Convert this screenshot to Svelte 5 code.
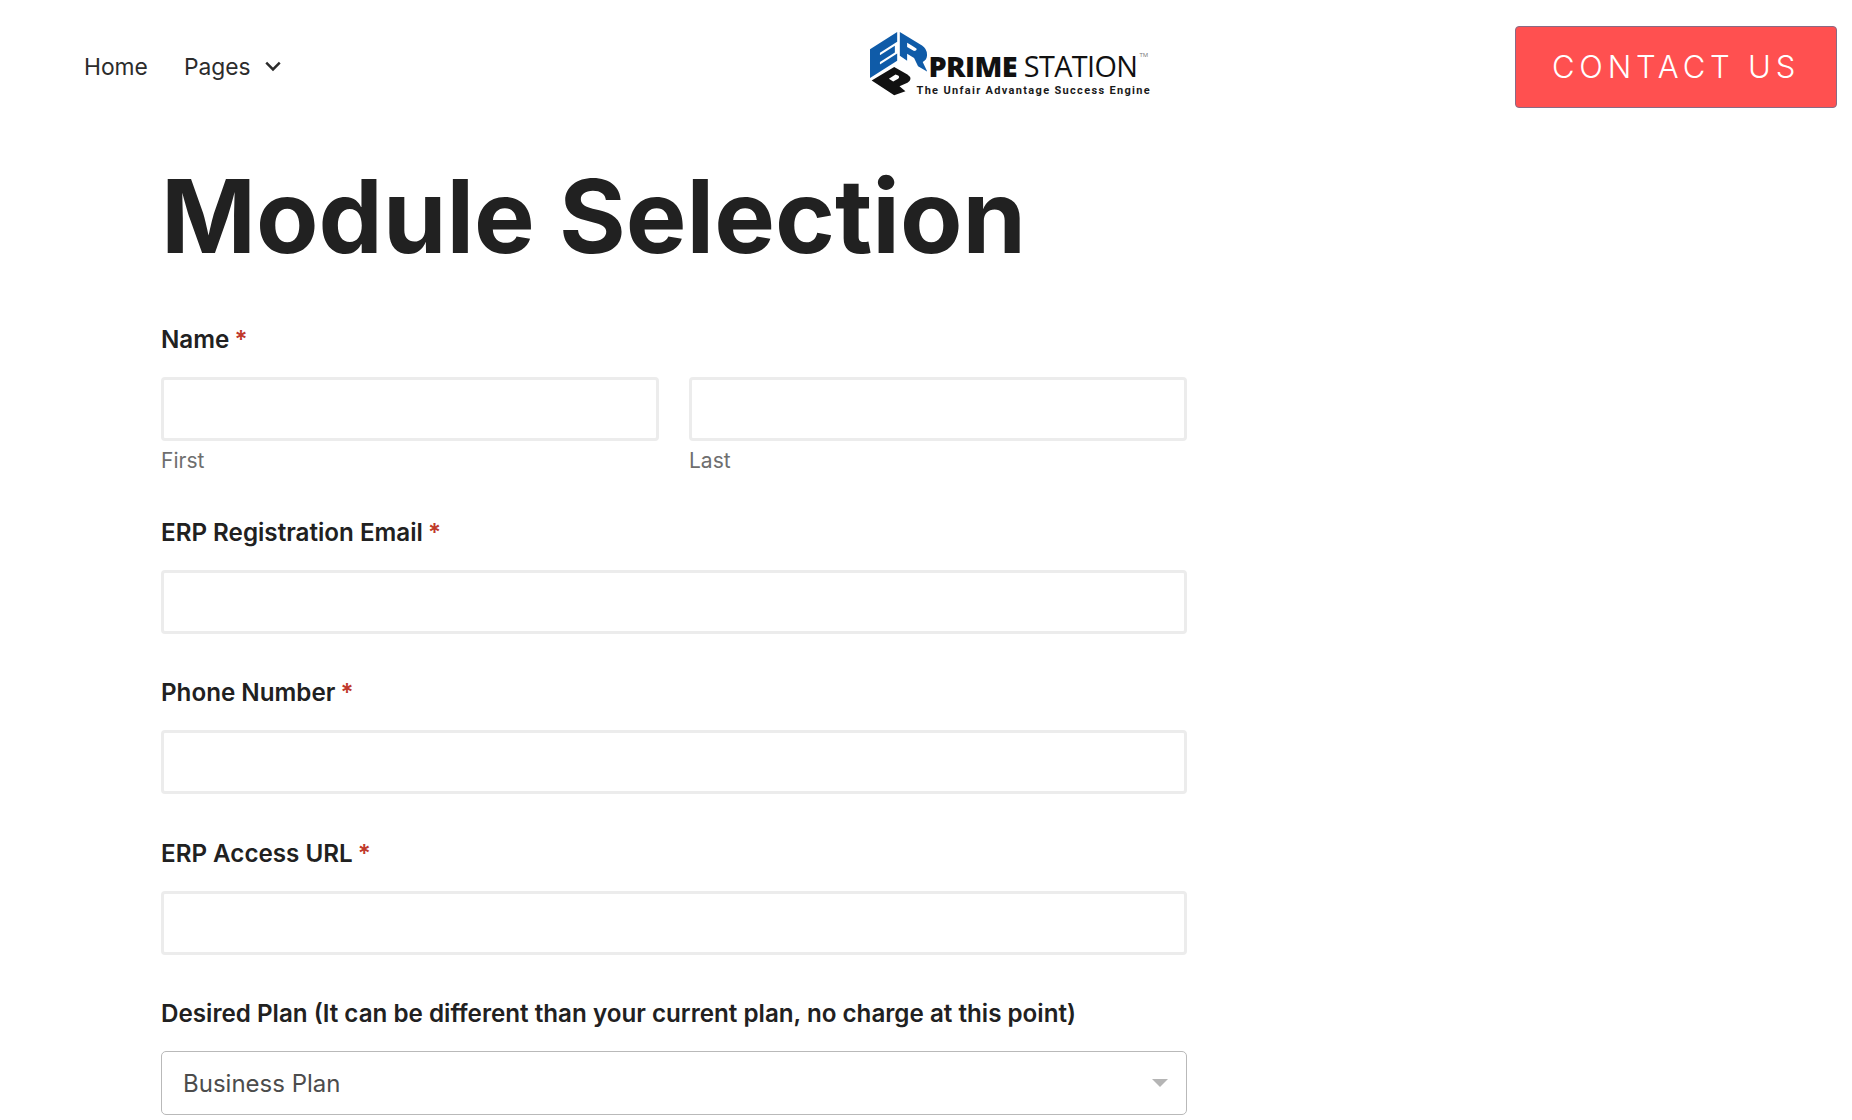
<script>
  const rows = [
    { label: 'ERP Registration Email' },
    { label: 'Phone Number' },
    { label: 'ERP Access URL' }
  ];
</script>

<div class="page">
  <header class="top">
    <nav class="nav">
      <a class="link" href="#home">Home</a>
      <a class="link" href="#pages">Pages
        <svg class="chev" viewBox="0 0 16 16" width="18" height="18"><path d="M2 5l6 6 6-6" fill="none" stroke="#2b2b2b" stroke-width="2.2"/></svg>
      </a>
    </nav>
    <div class="logo">
      <svg class="mark" viewBox="15 25 172 185" width="57" height="64" preserveAspectRatio="none">
        <path fill="#0f5ba8" d="M15 75 97 25V53L45 85V92L90 64.5V84.5L45 112V119L97 87V108L15 158z"/>
        <path fill="#0f5ba8" fill-rule="evenodd" d="M105 25 172 64Q188 74 187 94 186 106 174 112L188 140 160 124 148 100 127 88V108L105 94ZM127 56V68L148 80Q158 80 155 73L141 64z"/>
        <path fill="#111" fill-rule="evenodd" d="M20 165 88 126 128 148Q146 160 128 172L104 182 122 196 88 208zM72 160 85 168 100 160Q106 155 100 151L92 148z"/>
      </svg>
      <div class="words">
        <div class="name"><b>PRIME</b> STATION<sup>TM</sup></div>
        <div class="tag">The Unfair Advantage Success Engine</div>
      </div>
    </div>
    <a class="cta" href="#contact">CONTACT US</a>
  </header>

  <main class="content">
    <h1>Module Selection</h1>
    <form class="form">
      <div class="field">
        <span class="lab">Name <em>*</em></span>
        <div class="split">
          <div class="sub"><input type="text" /><small>First</small></div>
          <div class="sub"><input type="text" /><small>Last</small></div>
        </div>
      </div>
      {#each rows as r}
        <div class="field">
          <span class="lab">{r.label} <em>*</em></span>
          <input type="text" />
        </div>
      {/each}
      <div class="field">
        <span class="lab">Desired Plan (It can be different than your current plan, no charge at this point)</span>
        <div class="select">
          <span>Business Plan</span>
          <i class="caret"></i>
        </div>
      </div>
    </form>
  </main>
</div>

<style>
  :global(body) { margin: 0; background: #fff; }
  .page {
    height: 1120px;
    overflow: hidden;
    font-family: Inter, "Liberation Sans", sans-serif;
    color: #212121;
  }
  .top {
    display: grid;
    grid-template-columns: 786px auto 1fr;
    align-items: center;
    height: 134px;
    padding: 0 15px 0 84px;
  }
  .nav { display: flex; gap: 36px; align-items: center; margin-bottom: 2px; }
  .link {
    color: #2c2c2c;
    text-decoration: none;
    font-size: 22.8px;
    display: flex;
    align-items: center;
    gap: 13px;
  }
  .logo { display: flex; align-items: flex-start; margin-top: -3px; }
  .mark { display: block; margin-right: 1.5px; }
  .words { padding-top: 17px; }
  .name { font-family: "Open Sans", sans-serif; font-size: 28.8px; line-height: 34px; color: #111; letter-spacing: -0.6px; }
  .name b { font-weight: 800; }
  .name sup { font-size: 6px; color: #777; vertical-align: 20px; line-height: 0; margin-left: 2px; letter-spacing: 0; }
  .tag { font-family: Roboto, sans-serif; font-weight: 700; font-size: 11px; line-height: 16px; letter-spacing: 1.32px; color: #1a1a1a; margin-left: -12px; white-space: nowrap; }
  .cta {
    justify-self: end;
    box-sizing: border-box;
    width: 322px;
    height: 82px;
    padding-bottom: 2px;
    display: flex;
    align-items: center;
    justify-content: center;
    background: #ff5050;
    border: 1px solid #8a6a84;
    border-radius: 4px;
    color: #fff;
    font-size: 31px;
    font-weight: 300;
    letter-spacing: 4.8px;
    text-decoration: none;
  }
  .content { padding-left: 161px; width: 1026px; }
  h1 {
    margin: 24px 0 0;
    font-size: 102px;
    line-height: 116px;
    font-weight: 700;
    color: #212121;
    white-space: nowrap;
  }
  .form { display: flex; flex-direction: column; gap: 43.5px; margin-top: 50px; }
  .field { display: flex; flex-direction: column; gap: 21px; }
  .lab { font-size: 24.2px; line-height: 32px; font-weight: 600; color: #212121; }
  .lab em { font-style: normal; font-weight: 600; color: #c0392b; margin-left: -1px; }
  .split { display: grid; grid-template-columns: 1fr 1fr; gap: 30px; }
  .sub { display: flex; flex-direction: column; }
  small { font-size: 21px; line-height: 24px; color: #6e6e6e; margin-top: 8px; }
  input {
    box-sizing: border-box;
    width: 100%;
    height: 64px;
    border: 3px solid #ececec;
    border-radius: 4px;
    background: #fff;
    padding: 0 18px;
    font: inherit;
    display: block;
  }
  .select {
    box-sizing: border-box;
    height: 64px;
    border: 1.5px solid #b9b9b9;
    border-radius: 5px;
    padding: 0 20px 0 21px;
    display: flex;
    align-items: center;
    justify-content: space-between;
    font-size: 24px;
    color: #4c4c4c;
    background: #fff;
  }
  .caret {
    width: 0; height: 0;
    border-left: 8px solid transparent;
    border-right: 8px solid transparent;
    border-top: 8px solid #b5b5b5;
    margin-right: -2px;
  }
</style>
